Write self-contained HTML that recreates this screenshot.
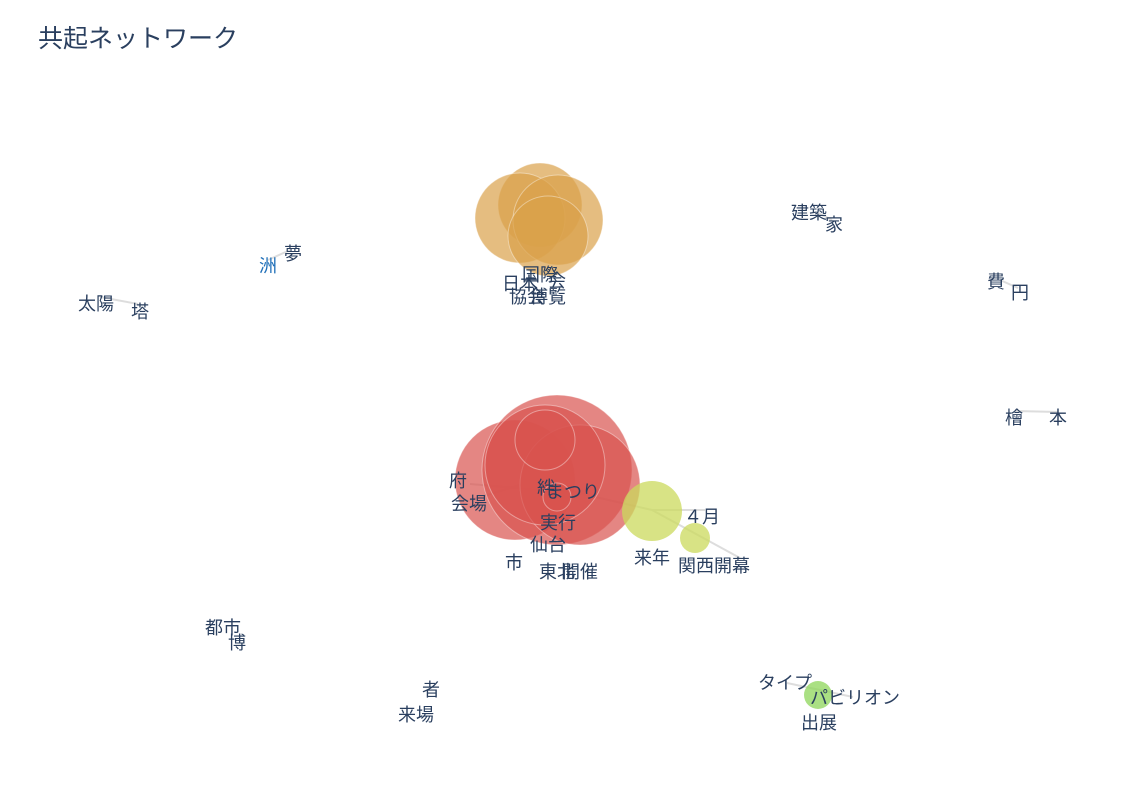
<!DOCTYPE html>
<html><head><meta charset="utf-8"><style>
html,body{margin:0;padding:0;background:#fff;width:1127px;height:794px;overflow:hidden}
svg text{font-family:"Liberation Sans","Noto Sans CJK JP",sans-serif;fill:#2a3f5f;font-size:18px;text-anchor:middle}
</style></head><body>
<svg width="1127" height="794" xmlns="http://www.w3.org/2000/svg">
<text x="38" y="47" style="font-size:25px;text-anchor:start">共起ネットワーク</text>
<g stroke="#ddd" stroke-width="2" fill="none">
<line x1="100" y1="297" x2="138" y2="304"/>
<line x1="268" y1="260" x2="290" y2="250"/>
<line x1="818" y1="213" x2="832" y2="220"/>
<line x1="1000" y1="280" x2="1018" y2="288"/>
<line x1="1015" y1="411" x2="1058" y2="412"/>
<line x1="787" y1="683" x2="853" y2="697"/>
<line x1="652" y1="510" x2="740" y2="558"/>
<line x1="652" y1="510" x2="705" y2="510"/>
<line x1="470" y1="484" x2="540" y2="490"/>
<line x1="470" y1="500" x2="520" y2="485"/>
<line x1="565" y1="490" x2="652" y2="510"/>
</g>
<g fill="#daa14a" fill-opacity="0.7" stroke="#fff" stroke-opacity="0.4">
<circle cx="540" cy="205" r="42"/>
<circle cx="520" cy="218" r="45"/>
<circle cx="558" cy="220" r="45"/>
<circle cx="548" cy="236" r="40"/>
</g>
<g fill="#d9534e" fill-opacity="0.7" stroke="#fff" stroke-opacity="0.4">
<circle cx="515" cy="480" r="60"/>
<circle cx="557" cy="470" r="75"/>
<circle cx="580" cy="485" r="60"/>
<circle cx="545" cy="465" r="60"/>
<circle cx="545" cy="440" r="30"/>
<circle cx="557" cy="497" r="14"/>
</g>
<circle cx="652" cy="511" r="30" fill="#cbda5c" fill-opacity="0.75"/>
<circle cx="695" cy="538" r="15" fill="#cbda5c" fill-opacity="0.75"/>
<circle cx="818" cy="695" r="14" fill="#8ed65a" fill-opacity="0.75"/>
<text x="540" y="281">国際</text>
<text x="520" y="290">日本</text>
<text x="557" y="287">会</text>
<text x="527" y="303">協会</text>
<text x="548" y="303">博覧</text>
<text x="293" y="260">夢</text>
<text x="268" y="272" style="fill:#1f6fb8">洲</text>
<text x="96" y="310">太陽</text>
<text x="140" y="318">塔</text>
<text x="809" y="219">建築</text>
<text x="834" y="231">家</text>
<text x="996" y="288">費</text>
<text x="1020" y="299">円</text>
<text x="1014" y="424">檜</text>
<text x="1058" y="424">本</text>
<text x="458" y="487">府</text>
<text x="469" y="510">会場</text>
<text x="546" y="494">絆</text>
<text x="573" y="498">まつり</text>
<text x="558" y="529">実行</text>
<text x="548" y="551">仙台</text>
<text x="514" y="569">市</text>
<text x="557" y="578">東北</text>
<text x="580" y="578">開催</text>
<text x="652" y="564">来年</text>
<text x="702" y="523">４月</text>
<text x="714" y="572">関西開幕</text>
<text x="223" y="634">都市</text>
<text x="237" y="649">博</text>
<text x="431" y="696">者</text>
<text x="416" y="721">来場</text>
<text x="785" y="689">タイプ</text>
<text x="855" y="704">パビリオン</text>
<text x="819" y="729">出展</text>
</svg>
</body></html>
